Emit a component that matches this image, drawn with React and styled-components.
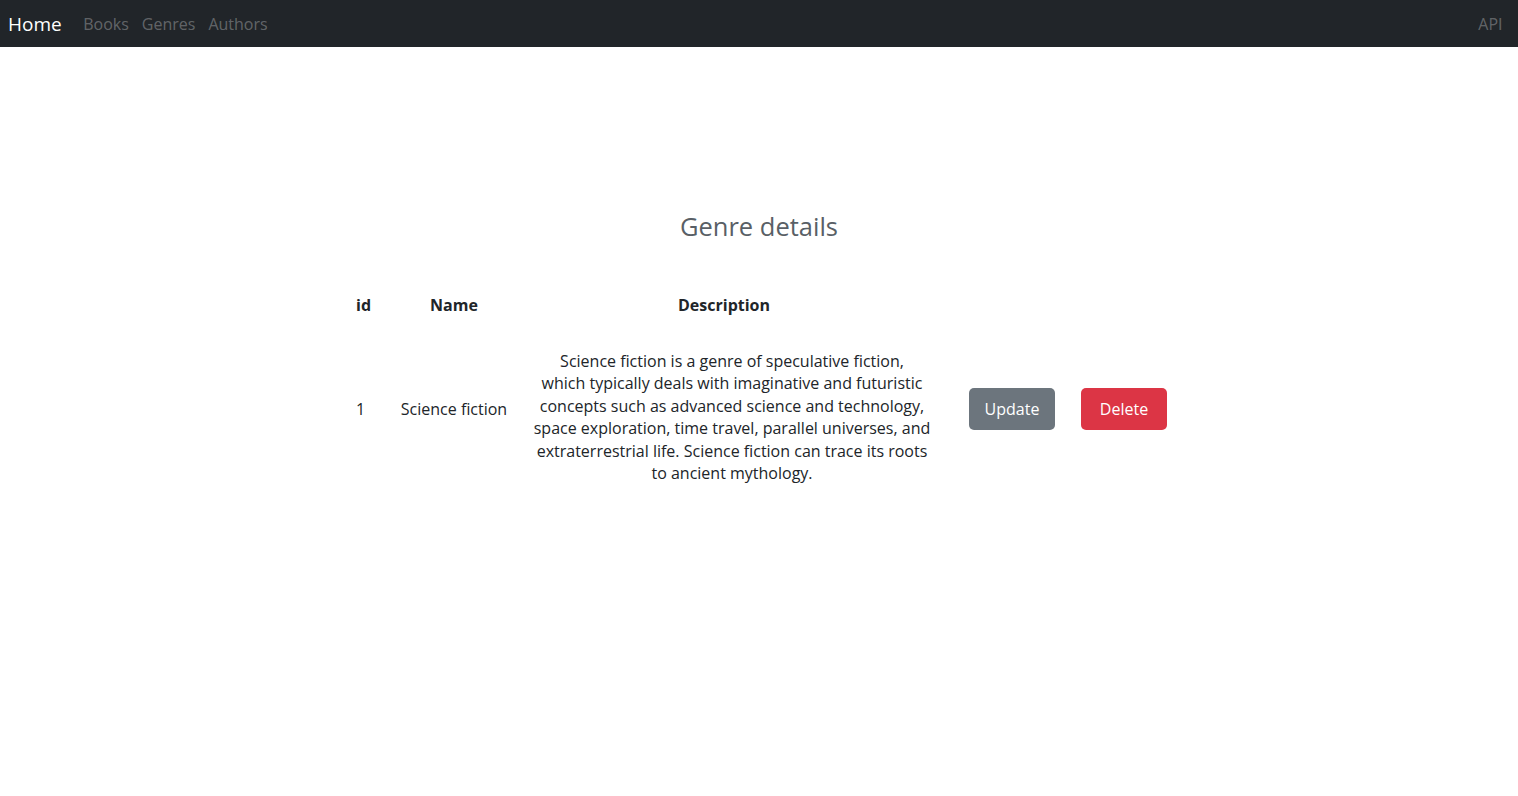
import styled, { createGlobalStyle } from "styled-components";

const GlobalStyle = createGlobalStyle`
  body {
    margin: 0;
    font-family: "Open Sans", "Noto Sans", sans-serif;
    font-size: 16px;
    color: #212529;
    background: #fff;
  }
`;

const Navbar = styled.nav`
  height: 47px;
  background: #212529;
  display: flex;
  align-items: center;
  padding: 0 9px 0 8px;
`;

const Brand = styled.a`
  color: #fff;
  font-size: 19px;
  margin-right: 15px;
  text-decoration: none;
`;

const NavLinks = styled.div`
  display: flex;
  flex: 1;
`;

const NavLink = styled.a`
  color: rgba(255, 255, 255, 0.3);
  padding: 0 6.5px;
  text-decoration: none;
`;

const Main = styled.main`
  display: flex;
  flex-direction: column;
  align-items: center;
  padding-top: 164px;
`;

const Title = styled.h3`
  margin: 0 0 43px;
  font-size: 25.5px;
  font-weight: 400;
  line-height: 1.2;
  color: #595f66;
`;

const Table = styled.table`
  border-collapse: collapse;
  text-align: center;
  line-height: 1.5;
`;

const Head = styled.th`
  padding: 8px;
  font-weight: 700;
  text-align: ${(p) => p.$align || "center"};
  vertical-align: middle;
`;

const Cell = styled.td`
  padding: 8px;
  text-align: ${(p) => p.$align || "center"};
  vertical-align: middle;
`;

const IdCell = styled(Cell)`
  width: 28px;
`;

const NameCell = styled(Cell)`
  width: 108px;
`;

const DescriptionCell = styled.td`
  width: 400px;
  padding: 25px 0 8px 16px;
  line-height: 22.5px;
  text-align: center;
  vertical-align: middle;
`;

const ActionCell = styled.td`
  width: 86px;
  padding: ${(p) => p.$pad};
  vertical-align: middle;
`;

const Button = styled.button`
  display: block;
  width: 86px;
  height: 42px;
  border: none;
  border-radius: 5px;
  color: #fff;
  font-family: inherit;
  font-size: 16px;
  background: ${(p) => (p.$variant === "danger" ? "#dc3545" : "#6c757d")};
  cursor: pointer;
`;

export default function App() {
  return (
    <>
      <GlobalStyle />
      <Navbar>
        <Brand href="#">Home</Brand>
        <NavLinks>
          <NavLink href="#">Books</NavLink>
          <NavLink href="#">Genres</NavLink>
          <NavLink href="#">Authors</NavLink>
        </NavLinks>
        <NavLink href="#">API</NavLink>
      </Navbar>
      <Main>
        <Title>Genre details</Title>
        <Table>
          <thead>
            <tr>
              <Head $align="left">id</Head>
              <Head>Name</Head>
              <Head>Description</Head>
              <Head></Head>
              <Head></Head>
            </tr>
          </thead>
          <tbody>
            <tr>
              <IdCell $align="left">1</IdCell>
              <NameCell>Science fiction</NameCell>
              <DescriptionCell>
                Science fiction is a genre of speculative fiction,
                <br />
                which typically deals with imaginative and futuristic
                <br />
                concepts such as advanced science and technology,
                <br />
                space exploration, time travel, parallel universes, and
                <br />
                extraterrestrial life. Science fiction can trace its roots
                <br />
                to ancient mythology.
              </DescriptionCell>
              <ActionCell $pad="8px 13px 8px 37px">
                <Button>Update</Button>
              </ActionCell>
              <ActionCell $pad="8px 3px 8px 13px">
                <Button $variant="danger">Delete</Button>
              </ActionCell>
            </tr>
          </tbody>
        </Table>
      </Main>
    </>
  );
}
